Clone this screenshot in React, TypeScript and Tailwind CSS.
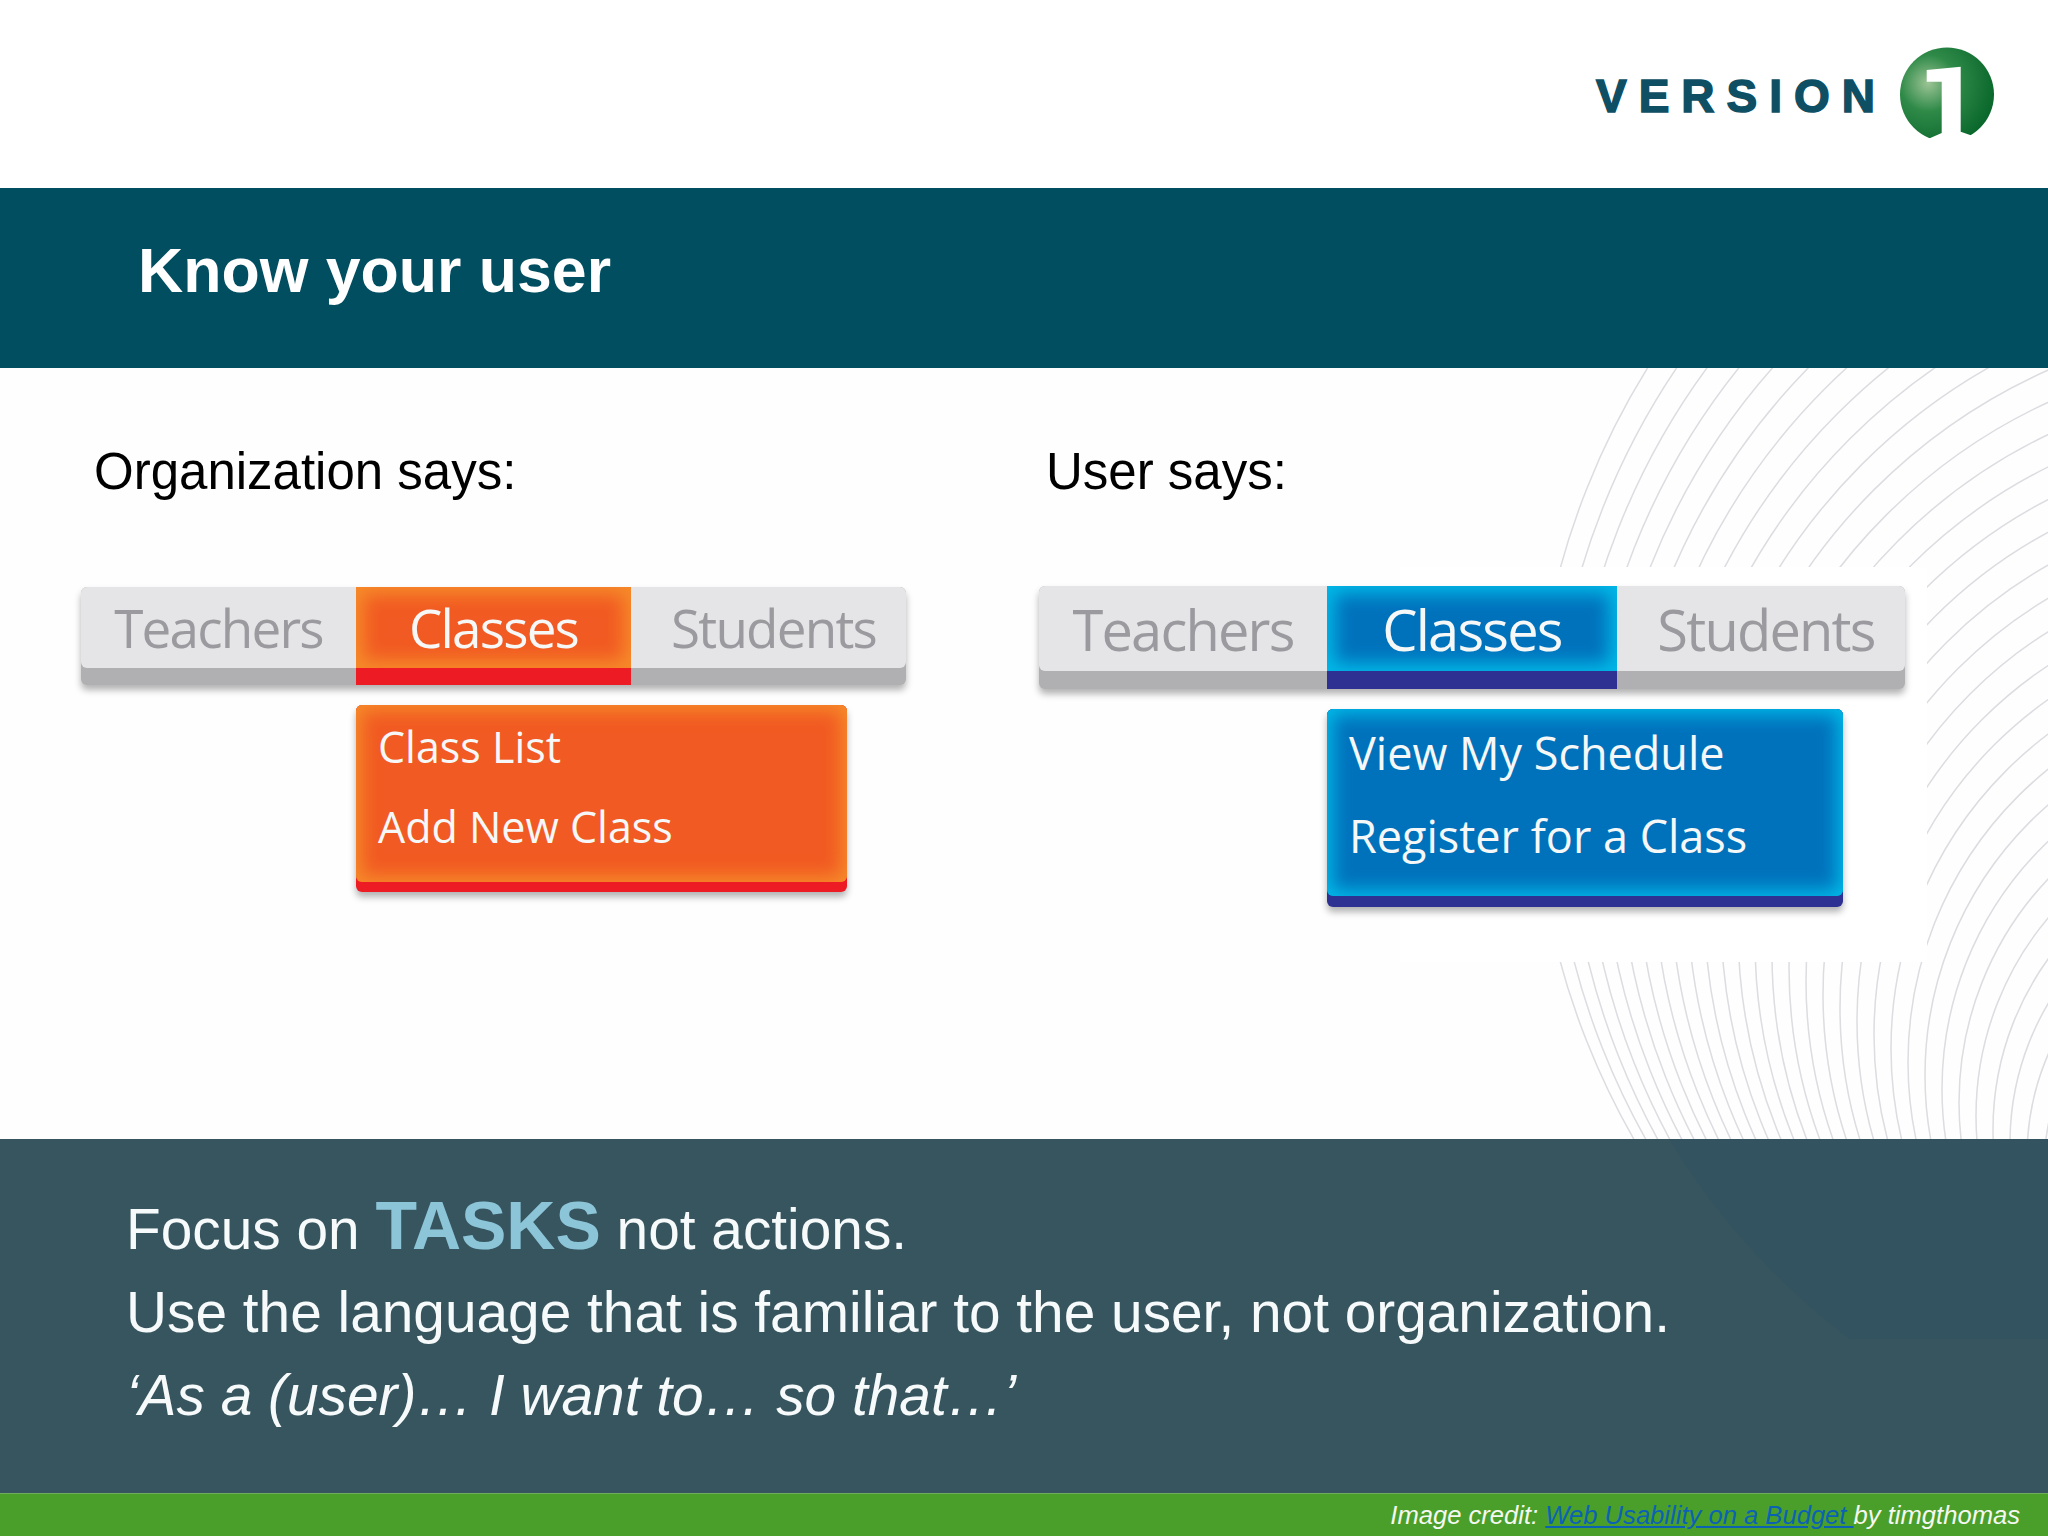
const arcs = Array.from({ length: 43 }, (_, i) => ({
  r: 750 - i * 17,
  cy: 397 + i * 13.5,
}));

const tabFont = "[font-family:'Open_Sans',sans-serif]";

interface MenuProps {
  widths: number[];
  faceClass: string;
  depthClass: string;
  dropClass: string;
  items: string[];
  barWidth: string;
  faceH: string;
  depthH: string;
  tabText: string;
  dropBox: string;
}

function TabMenu({ widths, faceClass, depthClass, dropClass, items, barWidth, faceH, depthH, tabText, dropBox }: MenuProps) {
  const labels = ["Teachers", "Classes", "Students"];
  return (
    <div className={barWidth}>
      <div className="flex rounded-[6px] bg-[#b0b0b2] shadow-[0_5px_7px_rgba(0,0,0,0.3)] overflow-hidden">
        {labels.map((label, i) => (
          <div key={label} style={{ width: widths[i] }} className={`${depthH} ${i === 1 ? depthClass : ""}`}>
            <div
              className={`${faceH} flex items-center justify-center tracking-[-1.8px] ${tabText} ${tabFont} ${
                i === 1
                  ? `${faceClass} text-[#f6f8f8]`
                  : `bg-[#e5e5e8] text-[#9b9b9f] ${i === 0 ? "rounded-bl-[6px]" : "rounded-br-[6px] pl-[10px]"}`
              }`}
            >
              {label}
            </div>
          </div>
        ))}
      </div>
      <div className={`${dropBox} rounded-[6px] shadow-[0_5px_7px_rgba(0,0,0,0.3)] overflow-hidden ${depthClass}`}>
        <div className={`${dropClass} rounded-b-[6px] flex flex-col ${tabFont} text-[#f6f8f8]`}>
          {items.map((item) => (
            <div key={item}>{item}</div>
          ))}
        </div>
      </div>
    </div>
  );
}

export default function App() {
  return (
    <div className="w-[2048px] h-[1536px] flex flex-col overflow-hidden bg-white [font-family:'Liberation_Sans',Arial,sans-serif]">
      {/* logo */}
      <div className="h-[188px] flex items-center justify-end gap-[10px] pr-[51px]">
        <span className="pt-[4px] text-[46px] font-bold leading-none tracking-[12px] text-[#0e4f64] [-webkit-text-stroke:1.5px_#0e4f64]">
          VERSION
        </span>
        <svg width="100" height="100" viewBox="0 0 100 100">
          <defs>
            <radialGradient id="ball" cx="0.3" cy="0.38" r="0.75">
              <stop offset="0" stopColor="#9cc495" />
              <stop offset="0.4" stopColor="#2f8a48" />
              <stop offset="1" stopColor="#07652a" />
            </radialGradient>
          </defs>
          <circle cx="50" cy="50.5" r="47" fill="url(#ball)" />
          <polygon
            fill="#ffffff"
            points="29.7,26 63.7,22.7 63.7,87.7 76,92 76,105 31,105 31,95 44.7,89 44.7,37.7 29.7,37.7"
          />
        </svg>
      </div>

      <div className="h-[180px] bg-[#004e60] flex items-center pl-[138px] pb-[16px]">
        <h1 className="text-[62.6px] font-bold text-white leading-none">Know your user</h1>
      </div>

      <div className="relative h-[771px] bg-[#fefefe]">
        <svg className="absolute inset-0" width="2048" height="771" viewBox="0 0 2048 771">
          {arcs.map((a) => (
            <circle key={a.r} cx="2284" cy={a.cy} r={a.r} fill="none" stroke="#dcdce1" strokeWidth="1.5" />
          ))}
          <rect x="1400" y="199" width="527" height="395" fill="#ffffff" />
        </svg>
        <div className="relative flex pl-[81px] pt-[73px]">
          <div className="w-[958px]">
            <p className="ml-[13px] h-[62px] text-[51px] leading-[62px] text-black">Organization says:</p>
            <div className="h-[84px]" />
            <TabMenu
              widths={[275, 275, 275]}
              faceClass="bg-[#f15a22] shadow-[inset_0_0_18px_8px_#f68b2a]"
              depthClass="bg-[#ed1c24]"
              dropClass="bg-[#f15a22] shadow-[inset_0_0_18px_6px_#f68b2a] px-[22px] pt-[12px] h-[177px] gap-[20px] leading-[60px] text-[43px]"
              items={["Class List", "Add New Class"]}
              barWidth="w-[825px]"
              faceH="h-[81px]"
              depthH="pb-[17px]"
              tabText="text-[53px]"
              dropBox="mt-[20px] ml-[275px] w-[491px] pb-[10px]"
            />
          </div>
          <div>
            <p className="ml-[7px] h-[62px] text-[51px] leading-[62px] text-black">User says:</p>
            <div className="h-[83px]" />
            <TabMenu
              widths={[288, 290, 288]}
              faceClass="bg-[#0072bc] shadow-[inset_0_0_18px_8px_#00b9e8]"
              depthClass="bg-[#2e3192]"
              dropClass="bg-[#0072bc] shadow-[inset_0_0_18px_6px_#00b9e8] px-[22px] pt-[14px] h-[187px] gap-[23px] leading-[60px] text-[45px]"
              items={["View My Schedule", "Register for a Class"]}
              barWidth="w-[866px]"
              faceH="h-[85px]"
              depthH="pb-[18px]"
              tabText="text-[56px]"
              dropBox="mt-[20px] ml-[288px] w-[516px] pb-[11px]"
            />
          </div>
        </div>
      </div>

      <div className="relative h-[354px] bg-[#36555f] overflow-hidden pl-[126px] pt-[45px] text-[56.8px] leading-[83px] text-[#f7fafa]">
        <svg className="absolute inset-0" width="2048" height="354" viewBox="0 0 2048 354">
          <defs>
            <clipPath id="fade">
              <rect x="0" y="0" width="2048" height="200" />
            </clipPath>
          </defs>
          <circle cx="2284" cy="-374" r="720" fill="#2f5168" opacity="0.25" clipPath="url(#fade)" />
        </svg>
        <p className="relative">
          Focus on <span className="text-[68px] font-bold text-[#8cc4d8]">TASKS</span> not actions.
        </p>
        <p className="relative">Use the language that is familiar to the user, not organization.</p>
        <p className="relative italic">‘As a (user)… I want to… so that…’</p>
      </div>

      <div className="h-[43px] bg-[#4a9f2a] border-t border-[#6fae5e] flex items-center justify-end pr-[28px] text-[25.6px] italic text-[#f4f8f0]">
        <span>
          Image credit: <span className="text-[#0b62b5] underline">Web Usability on a Budget </span>by timgthomas
        </span>
      </div>
    </div>
  );
}
